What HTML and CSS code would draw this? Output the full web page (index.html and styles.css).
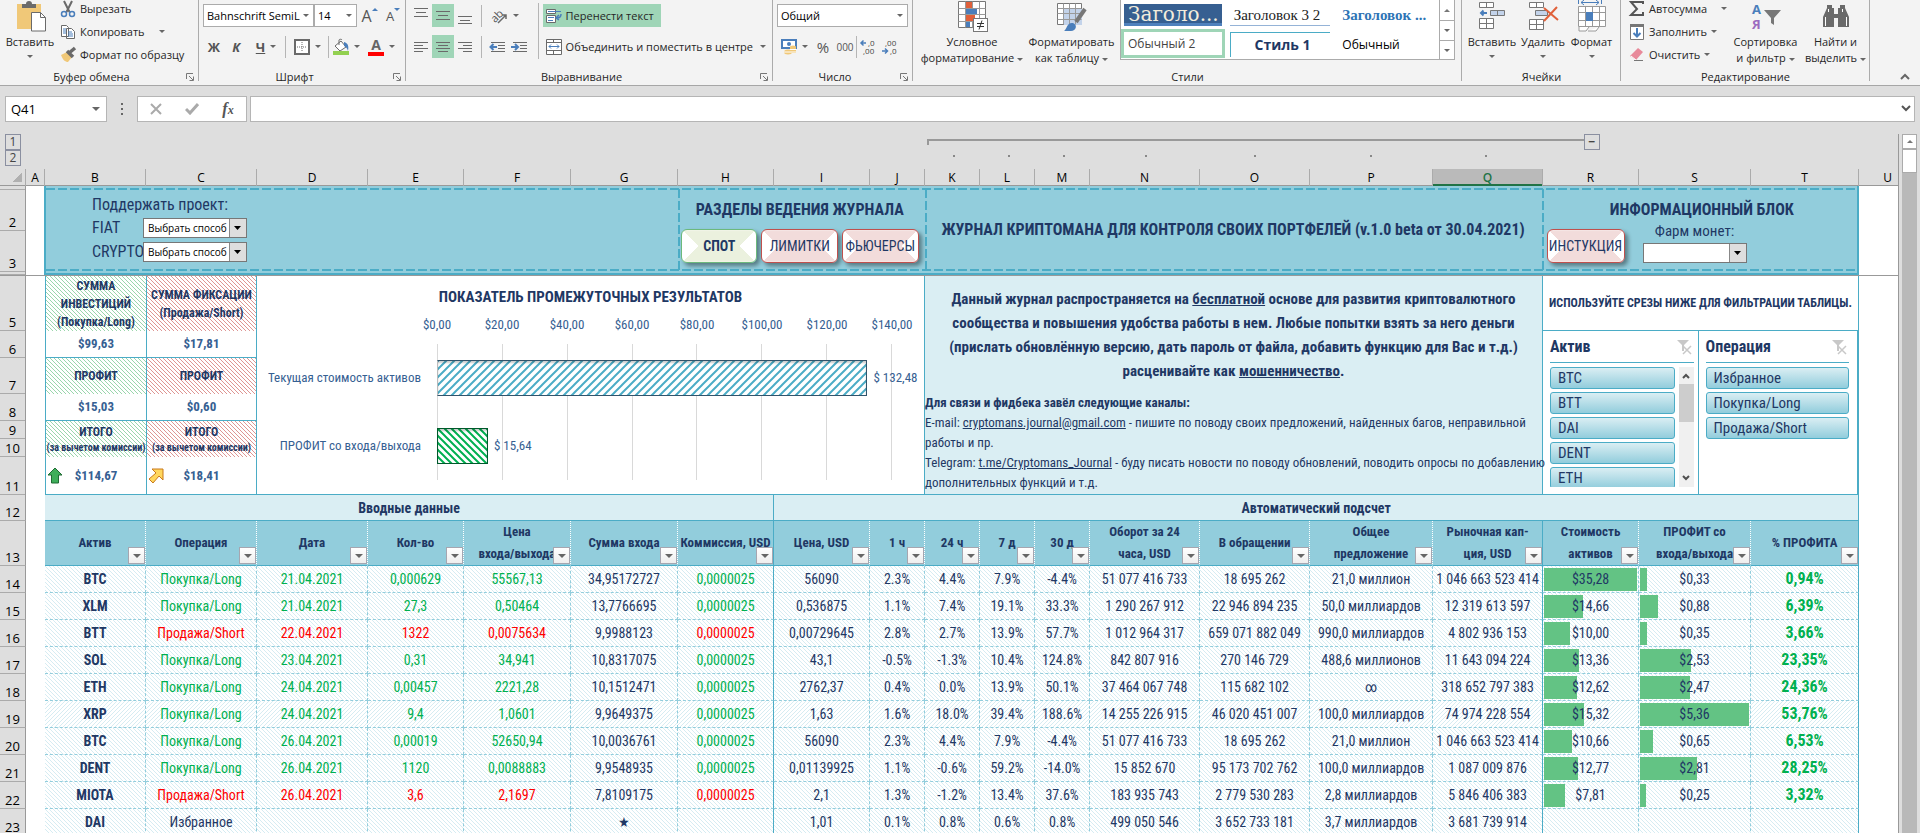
FILE: index.html
```html
<!DOCTYPE html>
<html lang="ru">
<head>
<meta charset="utf-8">
<title>Журнал криптомана</title>
<link rel="stylesheet" href="styles.css">
</head>
<body>
<header class="ribbon">
  <section class="group">
    <div class="tools">
      <button class="big w60"><svg width="32" height="32" viewBox="0 0 32 32"><rect x="3" y="4" width="24" height="25" fill="#f0c878"/><path d="M8 4h4a3 3 0 0 1 6 0h4v4H8z" fill="#6a6a6a"/><path d="M17.500 12.500h9l5 5v13.500h-14z" fill="#fff" stroke="#6a6a6a"/><path d="M26.500 12.500v5h5" fill="none" stroke="#6a6a6a"/></svg><span>Вставить</span><i class="caret"></i></button>
      <div class="stack">
        <button><svg width="16" height="18" viewBox="0 0 16 18"><path d="M4 1l5.500 11M12 1L6.500 12" stroke="#6a6a6a" stroke-width="2" fill="none"/><circle cx="4" cy="14" r="2.500" fill="none" stroke="#4a7ebb" stroke-width="1.500"/><circle cx="12" cy="14" r="2.500" fill="none" stroke="#4a7ebb" stroke-width="1.500"/></svg>Вырезать</button>
        <button><svg width="16" height="16" viewBox="0 0 16 16"><path d="M1.500 1.500h5l2 2v9h-7zM6.500 4.500h5l3 3v7h-8z" fill="#fff" stroke="#6a6a6a"/><path d="M3 5h3M3 7h3M3 9h3M8 8h4M8 10h5M8 12h5" stroke="#4a7ebb"/></svg>Копировать<i class="caret gap"></i></button>
        <button><svg width="16" height="16" viewBox="0 0 16 16"><path d="M1 8l6-3 5 5-4 5c-3 0-5-2-7-7z" fill="#f0c878"/><path d="M7 4l6 6M9 6l6-5" stroke="#6a6a6a" stroke-width="3.500"/></svg>Формат по образцу</button>
      </div>
    </div>
    <div class="caption">Буфер обмена<svg class="launch" width="8" height="8" viewBox="0 0 8 8"><path d="M.5 6V.5H7M3 3l4 4M7.500 3.500v4h-4" fill="none" stroke="#777"/></svg></div>
  </section>
  <section class="group">
    <div class="lines pad5">
      <div class="line"><select class="field w111" aria-label="Шрифт"><option>Bahnschrift SemiL</option></select><select class="field w43" aria-label="Размер"><option>14</option></select><button class="tool w25 grow-a">A<sup class="up"></sup></button><button class="tool w22 shrink-a">A<sup class="down"></sup></button></div>
      <div class="line"><button class="tool w22 b">Ж</button><button class="tool w22 b it">К</button><button class="tool w38 b"><u>Ч</u><i class="caret"></i></button><i class="sep"></i><button class="tool w42" aria-label="Границы"><svg width="16" height="16" viewBox="0 0 16 16"><rect x="1" y="1" width="14" height="14" fill="#fff" stroke="#6a6a6a" stroke-width="2"/><path d="M8 3v10M3 8h10" stroke="#6a6a6a" stroke-dasharray="1 1"/></svg><i class="caret"></i></button><i class="sep"></i><button class="tool w35" aria-label="Цвет заливки"><svg width="16" height="16" viewBox="0 0 16 16"><path d="M2 7l6-5 5 6-6 4z" fill="#fff" stroke="#6a6a6a"/><path d="M6 6V1c0-1 3-1 3 0" fill="none" stroke="#6a6a6a"/><path d="M11 3c4 1 5 4 4 9-1-3-2-4-4-5z" fill="#4a7ebb"/><rect y="12" width="16" height="4" fill="#92d050"/></svg><i class="caret"></i></button><button class="tool w35"><span class="fontcolor">A</span><i class="caret"></i></button></div>
    </div>
    <div class="caption">Шрифт<svg class="launch" width="8" height="8" viewBox="0 0 8 8"><path d="M.5 6V.5H7M3 3l4 4M7.500 3.500v4h-4" fill="none" stroke="#777"/></svg></div>
  </section>
  <section class="group">
    <div class="tools">
      <div class="lines pad5">
        <div class="line"><button class="tool w22" aria-label="По верхнему краю"><svg width="14" height="16" viewBox="0 0 14 16"><path d="M0 .5h14M2 4.500h10M0 8.500h14" stroke="#6a6a6a"/></svg></button><button class="tool w22 on" aria-label="По середине"><svg width="14" height="16" viewBox="0 0 14 16"><path d="M0 3.500h14M2 7.500h10M0 11.500h14" stroke="#6a6a6a"/></svg></button><button class="tool w22" aria-label="По нижнему краю"><svg width="14" height="16" viewBox="0 0 14 16"><path d="M0 8.500h14M2 12.500h10M0 15.500h14" stroke="#6a6a6a"/></svg></button><i class="sep far"></i><button class="tool w38" aria-label="Ориентация"><svg width="17" height="16" viewBox="0 0 17 16"><text x="0" y="12" class="rot" transform="rotate(-45 6 9)">ab</text><path d="M7 15l8-8M15 11V7h-4" fill="none" stroke="#6a6a6a" stroke-width="1.500"/></svg><i class="caret"></i></button></div>
        <div class="line"><button class="tool w22" aria-label="По левому краю"><svg width="14" height="12" viewBox="0 0 14 12"><path d="M0 1.500h14M0 4.500h9M0 7.500h14M0 10.500h9" stroke="#6a6a6a"/></svg></button><button class="tool w22 on" aria-label="По центру"><svg width="14" height="12" viewBox="0 0 14 12"><path d="M0 1.500h14M2 4.500h10M0 7.500h14M2 10.500h10" stroke="#6a6a6a"/></svg></button><button class="tool w22" aria-label="По правому краю"><svg width="14" height="12" viewBox="0 0 14 12"><path d="M0 1.500h14M5 4.500h9M0 7.500h14M5 10.500h9" stroke="#6a6a6a"/></svg></button><i class="sep far"></i><button class="tool w22" aria-label="Уменьшить отступ"><svg width="16" height="12" viewBox="0 0 16 12"><path d="M2 1.500h14M9 4.500h7M9 7.500h7M2 10.500h14" stroke="#6a6a6a"/><path d="M8 6H2M4.500 3L1.500 6l3 3" fill="none" stroke="#4a7ebb" stroke-width="2"/></svg></button><button class="tool w22" aria-label="Увеличить отступ"><svg width="16" height="12" viewBox="0 0 16 12"><path d="M2 1.500h14M9 4.500h7M9 7.500h7M2 10.500h14" stroke="#6a6a6a"/><path d="M0 6h6M4 3l3 3-3 3" fill="none" stroke="#4a7ebb" stroke-width="2"/></svg></button></div>
      </div>
      <i class="sep tall"></i>
      <div class="lines">
        <div class="line"><button class="wide on"><svg width="16" height="16" viewBox="0 0 16 16"><path d="M.5 1.500h9v4h-9zM.5 7.500h9v7h-9z" fill="#fff" stroke="#6a6a6a"/><path d="M2 3.500h13M2 9.500h6M2 12.500h5" stroke="#4a7ebb"/><path d="M15 6c0 3-2 4-4 4M13 7l-3 3 3 2" fill="none" stroke="#4a7ebb" stroke-width="1.500"/></svg>Перенести текст</button></div>
        <div class="line"><button class="wide"><svg width="16" height="16" viewBox="0 0 16 16"><path d="M.5.5h15v15H.5zM.5 3.500h15M.5 11.500h15M7.500.5v3M7.500 11.500v4" fill="#fff" stroke="#6a6a6a"/><path d="M3 7.500h10M5 5.500l-2 2 2 2M11 5.500l2 2-2 2" fill="none" stroke="#4a7ebb"/></svg>Объединить и поместить в центре<i class="caret in"></i></button></div>
      </div>
    </div>
    <div class="caption">Выравнивание<svg class="launch" width="8" height="8" viewBox="0 0 8 8"><path d="M.5 6V.5H7M3 3l4 4M7.500 3.500v4h-4" fill="none" stroke="#777"/></svg></div>
  </section>
  <section class="group">
    <div class="lines pad5">
      <div class="line"><select class="field w131" aria-label="Формат числа"><option>Общий</option></select></div>
      <div class="line"><button class="tool w35" aria-label="Денежный формат"><svg width="16" height="16" viewBox="0 0 16 16"><rect x="1" y="1" width="14" height="8" fill="#fff" stroke="#4a7ebb" stroke-width="2"/><circle cx="8" cy="5" r="2" fill="#4a7ebb"/><path d="M9 8h6v6H9z" fill="#f0c878"/><ellipse cx="12" cy="8" rx="3" ry="1.500" fill="#f0c878"/><ellipse cx="7" cy="13" rx="4" ry="2.500" fill="#f0c878"/><path d="M3 13h12M9 10.500h6" stroke="#fff"/></svg><i class="caret"></i></button><button class="tool w22 pct">%</button><button class="tool w22 zeros">000</button><i class="sep"></i><button class="tool w22" aria-label="Увеличить разрядность"><svg width="16" height="16" viewBox="0 0 16 16"><path d="M6 4H1M3.500 1.500L1 4l2.500 2.500" fill="none" stroke="#4a7ebb" stroke-width="1.500"/><text x="8" y="7" class="mini">,0</text><text x="3" y="15" class="mini">,00</text></svg></button><button class="tool w22" aria-label="Уменьшить разрядность"><svg width="16" height="16" viewBox="0 0 16 16"><path d="M0 12h5M3 9.500L5.500 12 3 14.500" fill="none" stroke="#4a7ebb" stroke-width="1.500"/><text x="3" y="7" class="mini">,00</text><text x="8" y="15" class="mini">,0</text></svg></button></div>
    </div>
    <div class="caption">Число<svg class="launch" width="8" height="8" viewBox="0 0 8 8"><path d="M.5 6V.5H7M3 3l4 4M7.500 3.500v4h-4" fill="none" stroke="#777"/></svg></div>
  </section>
  <section class="group">
    <div class="tools">
      <button class="big w118"><svg width="32" height="32" viewBox="0 0 32 32"><path d="M2.500 1.500h27v26h-27z" fill="#fff" stroke="#777"/><path d="M2.500 8.500h27M2.500 14.500h27M2.500 21.500h27M9.500 1.500v26M16.500 1.500v26M23.500 1.500v26" stroke="#999"/><path d="M10 2h6v6h-6zM10 15h9v6h-9z" fill="#e0603a"/><path d="M10 9h11v5H10zM10 22h4v5h-4z" fill="#4a7ebb"/><rect x="17.500" y="18.500" width="14" height="13" fill="#fff" stroke="#777"/><path d="M21 23.500h7M21 26.500h7M26 20.500l-3 9" stroke="#333"/></svg><span>Условное<br>форматирование<i class="caret in"></i></span></button>
      <button class="big w81"><svg width="32" height="32" viewBox="0 0 32 32"><path d="M1.500 3.500h24v21h-24z" fill="#fff" stroke="#777"/><path d="M8 9h18v16H8z" fill="#c3d3ea"/><path d="M1.500 8.500h24M1.500 13.500h24M1.500 19.500h24M7.500 3.500v21M13.500 3.500v21M19.500 3.500v21" stroke="#999"/><path d="M29 9l-9 13" stroke="#777" stroke-width="4"/><path d="M8 31c3-2 3-9 9-8 5 2 3 8-2 8z" fill="#4a7ebb"/></svg><span>Форматировать<br>как таблицу<i class="caret in"></i></span></button>
      <div class="gallery">
        <div class="styles">
          <button class="st title">Заголо...</button><button class="st h3">Заголовок 3 2</button><button class="st h4">Заголовок ...</button>
          <button class="st normal2">Обычный 2</button><button class="st one">Стиль 1</button><button class="st">Обычный</button>
        </div>
        <div class="arrows"><button aria-label="Вверх"><i class="caret upc"></i></button><button aria-label="Вниз"><i class="caret"></i></button><button aria-label="Ещё"><i class="caret more"></i></button></div>
      </div>
    </div>
    <div class="caption mid">Стили</div>
  </section>
  <section class="group">
    <div class="tools">
      <button class="big w60"><svg width="28" height="30" viewBox="0 0 28 30"><path d="M1.500 1.500h14v5h-14zM8.500 1.500v5M1.500 17.500h14v10h-14zM8.500 17.500v10M1.500 22.500h14" fill="#fff" stroke="#777"/><path d="M12.500 9.500h14v5h-14zM19.500 9.500v5" fill="#c3d3ea" stroke="#777"/><path d="M9 12H3M5.500 9.500L3 12l2.500 2.500" fill="none" stroke="#4a7ebb" stroke-width="2"/></svg><span>Вставить</span><i class="caret"></i></button>
      <button class="big w42"><svg width="30" height="30" viewBox="0 0 30 30"><path d="M1.500 1.500h14v5h-14zM8.500 1.500v5M1.500 18.500h14v10h-14zM8.500 18.500v10M1.500 23.500h14" fill="#fff" stroke="#777"/><path d="M7.500 9.500h12v5h-12z" fill="#c3d3ea" stroke="#777"/><path d="M16 7l14 12M29 6L16 20" stroke="#e0603a" stroke-width="2"/></svg><span>Удалить</span><i class="caret"></i></button>
      <button class="big w55"><svg width="30" height="32" viewBox="0 0 30 32"><path d="M1.500 0v4M24.500 0v4M4 2.500h18M7 0L4 2.500 7 5M19 0l3 2.500L19 5" fill="none" stroke="#4a7ebb"/><path d="M1.500 6.500h27v20h-27zM1.500 12.500h27M1.500 20.500h27M8.500 6.500v20M15.500 6.500v20M22.500 6.500v20" fill="#fff" stroke="#999"/><path d="M9 12h7v9H9z" fill="#4a7ebb"/><path d="M2 27v4h7l3-4M11 31h8l3-4" fill="#fff" stroke="#999"/></svg><span>Формат</span><i class="caret"></i></button>
    </div>
    <div class="caption mid">Ячейки</div>
  </section>
  <section class="group">
    <div class="tools">
      <div class="stack narrow">
        <button><svg width="16" height="16" viewBox="0 0 16 16"><path d="M14 3V1H2l6 7-6 6h12v-3" fill="none" stroke="#555" stroke-width="2"/></svg>Автосумма<i class="caret gap"></i></button>
        <button><svg width="16" height="16" viewBox="0 0 16 16"><path d="M1.500.5h13v15h-13z" fill="#fff" stroke="#777"/><path d="M1 0h14v3H1z" fill="#777"/><path d="M8 4v9M4.500 9L8 12.500 11.500 9" fill="none" stroke="#4a7ebb" stroke-width="2"/></svg>Заполнить<i class="caret in"></i></button>
        <button><svg width="16" height="16" viewBox="0 0 16 16"><path d="M1 9l8-8 5 4-7 8z" fill="#e8899a"/><path d="M2 9l5 4" stroke="#fff"/><path d="M5 13.500h9" stroke="#777"/></svg>Очистить<i class="caret in"></i></button>
      </div>
      <button class="big w75"><svg width="30" height="30" viewBox="0 0 30 30"><text x="1" y="13" class="az a">А</text><text x="1" y="28" class="az z">Я</text><path d="M13 9h17l-7 8v7l-3-2v-5z" fill="#777"/></svg><span>Сортировка<br>и фильтр<i class="caret in"></i></span></button>
      <button class="big w65"><svg width="28" height="30" viewBox="0 0 28 30"><path d="M5 4h5v3h2v6h4V7h2V4h5v3l4 9v10H16v-9h-4v9H1V16l4-9z" fill="#6a6a6a"/><path d="M3.500 16v9M24.500 16v9M6.500 8v3M20.500 8v3" stroke="#fff"/></svg><span>Найти и<br>выделить<i class="caret in"></i></span></button>
    </div>
    <div class="caption mid">Редактирование</div>
  </section>
  <button class="collapse" aria-label="Свернуть ленту"><svg width="10" height="7" viewBox="0 0 10 7"><path d="M1 6l4-4 4 4" fill="none" stroke="#666" stroke-width="2"/></svg></button>
</header>

<div class="formula">
  <select class="name" aria-label="Имя"><option>Q41</option></select>
  <i class="dots"></i>
  <div class="fx"><button aria-label="Отмена"><svg width="12" height="12" viewBox="0 0 12 12"><path d="M1 1l10 10M11 1L1 11" stroke="#aaa" stroke-width="2"/></svg></button><button aria-label="Ввод"><svg width="14" height="12" viewBox="0 0 14 12"><path d="M1 6l4 4 8-9" fill="none" stroke="#aaa" stroke-width="3"/></svg></button><button class="fn">f<small>x</small></button></div>
  <div class="entry"><input type="text" aria-label="Формула"><button aria-label="Развернуть"><svg width="10" height="8" viewBox="0 0 10 8"><path d="M1 1l4 4 4-4" fill="none" stroke="#555" stroke-width="2"/></svg></button></div>
</div>

<main class="work">
  <div class="sheet">
    <div class="outline cols">
      <div class="levels"><button>1</button><button>2</button></div>
      <div class="bracket"><i></i><i></i><i></i><i></i><i></i><i></i><i></i></div>
      <div class="minus"><button aria-label="Скрыть детали">−</button></div>
    </div>
    <div class="letters cols">
      <span class="corner"></span><span>A</span><span>B</span><span>C</span><span>D</span><span>E</span><span>F</span><span>G</span><span>H</span><span>I</span><span>J</span><span>K</span><span>L</span><span>M</span><span>N</span><span>O</span><span>P</span><span class="sel">Q</span><span>R</span><span>S</span><span>T</span><span>U</span>
    </div>

    <div class="cols banner-row">
      <div class="heads h-top"><span></span><span>2</span><span>3</span><span></span></div>
      <div class="banner">
        <div class="support">
          <p>Поддержать проект:</p>
          <label for="fiat">FIAT</label><select id="fiat" class="combo"><option>Выбрать способ</option></select>
          <label for="crypto">CRYPTO</label><select id="crypto" class="combo"><option>Выбрать способ</option></select>
        </div>
        <div class="parts">
          <h2>РАЗДЕЛЫ ВЕДЕНИЯ ЖУРНАЛА</h2>
          <div class="pills"><button class="pill green">СПОТ</button><button class="pill">ЛИМИТКИ</button><button class="pill thin">ФЬЮЧЕРСЫ</button></div>
        </div>
        <h1>ЖУРНАЛ КРИПТОМАНА ДЛЯ КОНТРОЛЯ СВОИХ ПОРТФЕЛЕЙ (v.1.0 beta от 30.04.2021)</h1>
        <div class="infoblock">
          <h2>ИНФОРМАЦИОННЫЙ БЛОК</h2>
          <button class="pill">ИНСТУКЦИЯ</button>
          <div class="farm"><label for="farm">Фарм монет:</label><select id="farm" class="combo"><option></option></select></div>
        </div>
      </div>
    </div>

    <div class="cols middle">
      <div class="heads h-mid"><span>5</span><span>6</span><span>7</span><span>8</span><span>9</span><span>10</span><span>11</span></div>
      <div class="stats long">
        <div class="lab">СУММА<br>ИНВЕСТИЦИЙ<br>(Покупка/Long)</div><div class="val">$99,63</div>
        <div class="lab">ПРОФИТ</div><div class="val">$15,03</div>
        <div class="lab">ИТОГО<small>(за вычетом комиссии)</small></div>
        <div class="val"><svg width="16" height="18" viewBox="0 0 16 18"><path d="M8 1l7 7h-3.500v8h-7V8H1z" fill="#3fae5a" stroke="#1f6b33"/></svg>$114,67</div>
      </div>
      <div class="stats short">
        <div class="lab">СУММА ФИКСАЦИИ<br>(Продажа/Short)</div><div class="val">$17,81</div>
        <div class="lab">ПРОФИТ</div><div class="val">$0,60</div>
        <div class="lab">ИТОГО<small>(за вычетом комиссии)</small></div>
        <div class="val"><svg width="16" height="18" viewBox="0 0 16 18"><path d="M4 2h11v11l-4-4-6 7-4-4 7-6z" fill="#ffd75e" stroke="#c9791a"/></svg>$18,41</div>
      </div>
      <div class="chart">
        <h3>ПОКАЗАТЕЛЬ ПРОМЕЖУТОЧНЫХ РЕЗУЛЬТАТОВ</h3>
        <div class="axis"><span>$0,00</span><span>$20,00</span><span>$40,00</span><span>$60,00</span><span>$80,00</span><span>$100,00</span><span>$120,00</span><span>$140,00</span></div>
        <div class="cats"><span>Текущая стоимость активов</span><span>ПРОФИТ со входа/выхода</span></div>
        <div class="plot">
          <div class="grid"><i></i><i></i><i></i><i></i><i></i><i></i><i></i><i></i></div>
          <div class="series"><b class="bar blue" style="width:94.6%"></b><span>$ 132,48</span></div>
          <div class="series"><b class="bar grn" style="width:11.2%"></b><span>$ 15,64</span></div>
        </div>
      </div>
      <div class="about">
        <p class="lead">Данный журнал распространяется на <u>бесплатной</u> основе для развития криптовалютного<br>сообщества и повышения удобства работы в нем. Любые попытки взять за него деньги<br>(прислать обновлённую версию, дать пароль от файла, добавить функцию для Вас и т.д.)<br>расценивайте как <u>мошенничество</u>.</p>
        <p><b>Для связи и фидбека завёл следующие каналы:</b><br>E-mail: <a href="#">cryptomans.journal@gmail.com</a> - пишите по поводу своих предложений, найденных багов, неправильной<br>работы и пр.<br>Telegram: <a href="#">t.me/Cryptomans_Journal</a> - буду писать новости по поводу обновлений, поводить опросы по добавлению<br>дополнительных функций и т.д.</p>
      </div>
      <div class="filters">
        <p>ИСПОЛЬЗУЙТЕ СРЕЗЫ НИЖЕ ДЛЯ ФИЛЬТРАЦИИ ТАБЛИЦЫ.</p>
        <div class="slicer">
          <h4>Актив<svg width="16" height="16" viewBox="0 0 16 16"><path d="M1 1h12L8 6v6H6V6z" fill="#c8c8c8"/><path d="M7 7l8 8M15 7l-8 8" stroke="#c8c8c8" stroke-width="1.500"/></svg></h4>
          <div class="scroller"><div class="items"><button>BTC</button><button>BTT</button><button>DAI</button><button>DENT</button><button>ETH</button></div>
          <div class="sbar"><svg width="10" height="8" viewBox="0 0 10 8"><path d="M2 6l3-3 3 3" fill="none" stroke="#505050" stroke-width="2"/></svg><i></i><svg width="10" height="8" viewBox="0 0 10 8"><path d="M2 2l3 3 3-3" fill="none" stroke="#505050" stroke-width="2"/></svg></div></div>
        </div>
        <div class="slicer">
          <h4>Операция<svg width="16" height="16" viewBox="0 0 16 16"><path d="M1 1h12L8 6v6H6V6z" fill="#c8c8c8"/><path d="M7 7l8 8M15 7l-8 8" stroke="#c8c8c8" stroke-width="1.500"/></svg></h4>
          <div class="items"><button>Избранное</button><button>Покупка/Long</button><button>Продажа/Short</button></div>
        </div>
      </div>
    </div>

    <table class="data">
      <colgroup><col class="c26"><col class="c19"><col class="c101"><col class="c111"><col class="c111"><col class="c96"><col class="c107"><col class="c107"><col class="c96"><col class="c96"><col class="c55"><col class="c55"><col class="c55"><col class="c55"><col class="c110"><col class="c110"><col class="c123"><col class="c110"><col class="c96"><col class="c112"><col class="c108"><col class="c39"></colgroup>
      <thead>
      <tr class="r12"><th class="n">12</th><td class="e"></td><th colspan="7" class="first strong">Вводные данные</th><th colspan="12" class="strong">Автоматический подсчет</th><td class="e"></td></tr>
      <tr class="r13"><th class="n">13</th><td class="e"></td><th class="first">Актив<button class="flt"></button></th><th>Операция<button class="flt"></button></th><th>Дата<button class="flt"></button></th><th>Кол-во<button class="flt"></button></th><th>Цена<br>входа/выхода<button class="flt"></button></th><th>Сумма входа<button class="flt"></button></th><th class="strong">Коммиссия, USD<button class="flt"></button></th><th>Цена, USD<button class="flt"></button></th><th>1 ч<button class="flt"></button></th><th>24 ч<button class="flt"></button></th><th>7 д<button class="flt"></button></th><th>30 д<button class="flt"></button></th><th>Оборот за 24<br>часа, USD<button class="flt"></button></th><th>В обращении<button class="flt"></button></th><th>Общее<br>предложение<button class="flt"></button></th><th class="strong">Рыночная кап-<br>ция, USD<button class="flt"></button></th><th>Стоимость<br>активов<button class="flt"></button></th><th>ПРОФИТ со<br>входа/выхода<button class="flt"></button></th><th class="strong">% ПРОФИТА<button class="flt"></button></th><td class="e"></td></tr>
      </thead>
      <tbody>
      <tr class="buy"><th class="n">14</th><td class="e"></td><td>BTC</td><td>Покупка/Long</td><td>21.04.2021</td><td>0,000629</td><td>55567,13</td><td>34,95172727</td><td>0,0000025</td><td>56090</td><td>2.3%</td><td>4.4%</td><td>7.9%</td><td>-4.4%</td><td>51 077 416 733</td><td>18 695 262</td><td>21,0 миллион</td><td>1 046 663 523 414</td><td><div class="m"><i style="width:100%"></i><span>$35,28</span></div></td><td><div class="m"><i style="width:6%"></i><span>$0,33</span></div></td><td>0,94%</td><td class="e"></td></tr>
      <tr class="buy"><th class="n">15</th><td class="e"></td><td>XLM</td><td>Покупка/Long</td><td>21.04.2021</td><td>27,3</td><td>0,50464</td><td>13,7766695</td><td>0,0000025</td><td>0,536875</td><td>1.1%</td><td>7.4%</td><td>19.1%</td><td>33.3%</td><td>1 290 267 912</td><td>22 946 894 235</td><td>50,0 миллиардов</td><td>12 319 613 597</td><td><div class="m"><i style="width:42%"></i><span>$14,66</span></div></td><td><div class="m"><i style="width:16%"></i><span>$0,88</span></div></td><td>6,39%</td><td class="e"></td></tr>
      <tr class="sell"><th class="n">16</th><td class="e"></td><td>BTT</td><td>Продажа/Short</td><td>22.04.2021</td><td>1322</td><td>0,0075634</td><td>9,9988123</td><td>0,0000025</td><td>0,00729645</td><td>2.8%</td><td>2.7%</td><td>13.9%</td><td>57.7%</td><td>1 012 964 317</td><td>659 071 882 049</td><td>990,0 миллиардов</td><td>4 802 936 153</td><td><div class="m"><i style="width:28%"></i><span>$10,00</span></div></td><td><div class="m"><i style="width:6%"></i><span>$0,35</span></div></td><td>3,66%</td><td class="e"></td></tr>
      <tr class="buy"><th class="n">17</th><td class="e"></td><td>SOL</td><td>Покупка/Long</td><td>23.04.2021</td><td>0,31</td><td>34,941</td><td>10,8317075</td><td>0,0000025</td><td>43,1</td><td>-0.5%</td><td>-1.3%</td><td>10.4%</td><td>124.8%</td><td>842 807 916</td><td>270 146 729</td><td>488,6 миллионов</td><td>11 643 094 224</td><td><div class="m"><i style="width:38%"></i><span>$13,36</span></div></td><td><div class="m"><i style="width:47%"></i><span>$2,53</span></div></td><td>23,35%</td><td class="e"></td></tr>
      <tr class="buy"><th class="n">18</th><td class="e"></td><td>ETH</td><td>Покупка/Long</td><td>24.04.2021</td><td>0,00457</td><td>2221,28</td><td>10,1512471</td><td>0,0000025</td><td>2762,37</td><td>0.4%</td><td>0.0%</td><td>13.9%</td><td>50.1%</td><td>37 464 067 748</td><td>115 682 102</td><td>∞</td><td>318 652 797 383</td><td><div class="m"><i style="width:35%"></i><span>$12,62</span></div></td><td><div class="m"><i style="width:46%"></i><span>$2,47</span></div></td><td>24,36%</td><td class="e"></td></tr>
      <tr class="buy alt"><th class="n">19</th><td class="e"></td><td>XRP</td><td>Покупка/Long</td><td>24.04.2021</td><td>9,4</td><td>1,0601</td><td>9,9649375</td><td>0,0000025</td><td>1,63</td><td>1.6%</td><td>18.0%</td><td>39.4%</td><td>188.6%</td><td>14 255 226 915</td><td>46 020 451 007</td><td>100,0 миллиардов</td><td>74 974 228 554</td><td><div class="m"><i style="width:43%"></i><span>$15,32</span></div></td><td><div class="m"><i style="width:100%"></i><span>$5,36</span></div></td><td>53,76%</td><td class="e"></td></tr>
      <tr class="buy"><th class="n">20</th><td class="e"></td><td>BTC</td><td>Покупка/Long</td><td>26.04.2021</td><td>0,00019</td><td>52650,94</td><td>10,0036761</td><td>0,0000025</td><td>56090</td><td>2.3%</td><td>4.4%</td><td>7.9%</td><td>-4.4%</td><td>51 077 416 733</td><td>18 695 262</td><td>21,0 миллион</td><td>1 046 663 523 414</td><td><div class="m"><i style="width:30%"></i><span>$10,66</span></div></td><td><div class="m"><i style="width:12%"></i><span>$0,65</span></div></td><td>6,53%</td><td class="e"></td></tr>
      <tr class="buy"><th class="n">21</th><td class="e"></td><td>DENT</td><td>Покупка/Long</td><td>26.04.2021</td><td>1120</td><td>0,0088883</td><td>9,9548935</td><td>0,0000025</td><td>0,01139925</td><td>1.1%</td><td>-0.6%</td><td>59.2%</td><td>-14.0%</td><td>15 852 670</td><td>95 173 702 762</td><td>100,0 миллиардов</td><td>1 087 009 876</td><td><div class="m"><i style="width:37%"></i><span>$12,77</span></div></td><td><div class="m"><i style="width:52%"></i><span>$2,81</span></div></td><td>28,25%</td><td class="e"></td></tr>
      <tr class="sell"><th class="n">22</th><td class="e"></td><td>MIOTA</td><td>Продажа/Short</td><td>26.04.2021</td><td>3,6</td><td>2,1697</td><td>7,8109175</td><td>0,0000025</td><td>2,1</td><td>1.3%</td><td>-1.2%</td><td>13.4%</td><td>37.6%</td><td>183 935 743</td><td>2 779 530 283</td><td>2,8 миллиардов</td><td>5 846 406 383</td><td><div class="m"><i style="width:23%"></i><span>$7,81</span></div></td><td><div class="m"><i style="width:5%"></i><span>$0,25</span></div></td><td>3,32%</td><td class="e"></td></tr>
      <tr><th class="n">23</th><td class="e"></td><td>DAI</td><td>Избранное</td><td></td><td></td><td></td><td>★</td><td></td><td>1,01</td><td>0.1%</td><td>0.8%</td><td>0.6%</td><td>0.8%</td><td>499 050 546</td><td>3 652 733 181</td><td>3,7 миллиардов</td><td>3 681 739 914</td><td></td><td></td><td></td><td class="e"></td></tr>
      </tbody>
    </table>
  </div>
  <div class="vscroll"><button aria-label="Прокрутить вверх"><i class="caret upc"></i></button><i class="thumb"></i></div>
</main>
</body>
</html>
```
FILE: styles.css
```css
:root {
  --ui: "Open Sans", "Noto Sans", sans-serif;
  --din: "Liberation Sans Narrow", "Roboto Condensed", "Open Sans Condensed", "DejaVu Sans Condensed", sans-serif;
  --navy: #1f3864;
  --steel: #366092;
  --teal: #4bacc6;
  --aqua: #92cddc;
  --ice: #daeef3;
}
* { box-sizing: border-box; }
body { margin: 0; height: 100vh; display: flex; flex-direction: column; overflow: hidden; background: #dedede; font: 12px/16px var(--ui); color: #262626; }
button { border: 0; padding: 0; background: none; font: inherit; color: inherit; white-space: nowrap; }
select { appearance: none; border-radius: 0; font: inherit; color: #000; }
h1, h2, h3, h4, p { margin: 0; }
i { font-style: normal; }

/* Ribbon */
.ribbon { flex: none; display: grid; grid-template-columns: 199fr 207fr 367fr 140fr 549fr 159fr 249fr 50fr; height: 86px; background: #f3f3f3; border-bottom: 1px solid #a6a6a6; overflow: hidden; font-size: 11px; }
.ribbon svg { overflow: visible; }
.group { position: relative; display: flex; flex-direction: column; min-width: 0; }
.group::after { content: ""; position: absolute; right: 0; top: 0; bottom: 4px; width: 1px; background: #ababab; }
.tools { display: flex; height: 66px; align-items: flex-end; }
.caption { display: flex; justify-content: center; height: 19px; line-height: 22px; padding-right: 16px; }
.caption.mid { padding-right: 0; }
.launch { position: absolute; right: 5px; bottom: 4px; }
.caret { display: inline-block; width: 0; height: 0; border: 3px solid transparent; border-top-color: #666; border-bottom: 0; flex: none; }
.caret.upc { border: 3px solid transparent; border-bottom-color: #777; border-top: 0; }
.caret.in { margin-left: 3px; vertical-align: middle; }
.caret.gap { margin-left: 10px; }
.stack .caret.in { margin-left: 0; }
.big { display: flex; flex-direction: column; align-items: center; height: 66px; line-height: 16px; }
.big svg { flex: none; height: 32px; margin-bottom: 2px; }
.big .caret { margin-top: 5px; }
.big .caret.in { margin-top: 0; }
.stack { display: flex; flex-direction: column; }
.stack button { display: flex; align-items: center; height: 23px; gap: 4px; }
.stack.narrow { width: 107px; padding-left: 8px; }
.w22 { width: 22px; } .w25 { width: 25px; } .w35 { width: 35px; } .w38 { width: 38px; } .w42 { width: 42px; } .w43 { width: 43px; }
.w55 { width: 55px; } .w60 { width: 60px; } .w65 { width: 65px; } .w75 { width: 75px; } .w81 { width: 81px; } .w111 { width: 111px; } .w118 { width: 118px; } .w131 { width: 131px; }
.lines { display: flex; flex-direction: column; height: 66px; }
.pad5 { padding-left: 4px; }
.line { display: flex; align-items: center; height: 31px; }
.field { height: 23px; padding: 0 3px; border: 1px solid #ababab; background: #fff url("data:image/svg+xml,%3Csvg xmlns='http://www.w3.org/2000/svg' width='6' height='3'%3E%3Cpath d='M0 0h6L3 3z' fill='%23666'/%3E%3C/svg%3E") no-repeat right 4px center; }
.tool { display: flex; align-items: center; justify-content: center; gap: 5px; height: 23px; flex: none; }
.on { background: #9fd5b7; }
.b { font-size: 13px; font-weight: 700; color: #555; }
.it { font-style: italic; }
.grow-a { font-size: 16px; color: #555; }
.shrink-a { font-size: 13px; color: #555; }
.grow-a, .shrink-a { gap: 0; }
.up, .down { align-self: flex-start; border: 3px solid transparent; border-bottom-color: #4a7ebb; border-top: 0; margin-top: 4px; }
.down { border: 3px solid transparent; border-top-color: #4a7ebb; border-bottom: 0; }
.fontcolor { width: 16px; height: 18px; border-bottom: 4px solid #f00; font-weight: 700; font-size: 14px; line-height: 14px; color: #666; }
.sep { width: 1px; height: 22px; background: #b5b5b5; }
.sep.far { margin: 0 4px 0 5px; }
.sep.tall { height: 56px; align-self: flex-start; margin: 3px 4px 0 8px; }
.wide { display: flex; align-items: center; gap: 4px; height: 23px; padding: 0 7px 0 3px; }
.pct { font-size: 15px; color: #555; }
.zeros { font-size: 10px; color: #555; }
.mini { font: 8px "Open Sans", sans-serif; fill: #444; }
.rot { font: 11px "Open Sans", sans-serif; fill: #555; }
.az { font: 700 13px "Open Sans", sans-serif; }
.az.a { fill: #4a7ebb; } .az.z { fill: #9b6bc0; }
.gallery { display: flex; flex: 1; align-self: flex-start; height: 60px; margin: 0 7px 0 8px; border: 1px solid #ababab; border-top: 0; background: #fff; }
.styles { flex: 1; display: grid; grid-template-columns: 106fr 109fr 104fr; grid-template-rows: 28px 31px; }
.st { margin: 4px 5px 2px 3px; text-align: left; padding-left: 4px; font-size: 12px; color: #000; }
.st.title { background: #365f91; border-bottom: 3px solid #4f81bd; color: #f2ecdc; font: 20px/18px "DejaVu Serif", serif; }
.st.h3 { border-bottom: 1px solid #95b3d7; font: 15px/18px "Liberation Serif", serif; color: #222; }
.st.h4 { font: 700 15px/18px "Liberation Serif", serif; color: #2e74b5; }
.st.normal2 { margin: 1px 2px 1px 0; border: 3px solid #9fd5b7; color: #444; }
.st.one { border: 1px solid var(--teal); border-width: 1px 0 0 1px; text-align: center; font: 700 14px/18px var(--ui); color: var(--navy); }
.arrows { width: 15px; display: grid; grid-template-rows: 20px 20px 19px; border-left: 1px solid #ababab; }
.arrows button + button { border-top: 1px solid #ababab; }
.arrows button { display: grid; place-items: center; }
.more { box-shadow: 0 -5px 0 -2px #666; }
.collapse { align-self: end; justify-self: end; margin: 0 10px 5px; height: 7px; line-height: 0; }

/* Formula bar */
.formula { flex: none; display: flex; height: 48px; padding: 10px 5px 12px; }
.name { width: 102px; height: 26px; padding-left: 5px; font-size: 13px; border: 1px solid #b5b5b5; background: #fff url("data:image/svg+xml,%3Csvg xmlns='http://www.w3.org/2000/svg' width='8' height='4'%3E%3Cpath d='M0 0h8L4 4z' fill='%23666'/%3E%3C/svg%3E") no-repeat right 6px center; }
.dots { width: 2px; height: 12px; margin: 7px 14px; background: repeating-linear-gradient(#666 0 2px, transparent 2px 5px); }
.fx { display: grid; grid-template-columns: 1fr 1fr 1fr; width: 110px; height: 26px; border: 1px solid #b5b5b5; background: #fff; align-items: center; }
.fx button { line-height: 0; }
.fx .fn { font: italic 700 16px/20px "Liberation Serif", serif; color: #555; }
.fn small { font-size: 12px; }
.entry { flex: 1; display: flex; height: 26px; margin-left: 3px; border: 1px solid #b5b5b5; background: #fff; }
.entry input { flex: 1; border: 0; background: none; }
.entry button { width: 17px; line-height: 0; }

/* Sheet frame */
.work { flex: 1; display: flex; min-height: 0; }
.sheet { flex: 1; min-width: 0; overflow: hidden; border-right: 1px solid #999; }
.cols { display: grid; grid-template-columns: 26px 19fr 101fr 111fr 111fr 96fr 107fr 107fr 96fr 96fr 55fr 55fr 55fr 55fr 110fr 110fr 123fr 110fr 96fr 112fr 108fr 39fr; }
.cols > * { min-width: 0; }
.outline { height: 35px; }
.levels { grid-column: 1; padding-left: 5px; display: grid; grid-template-rows: 16px 16px; }
.levels button, .minus button { width: 16px; height: 16px; border: 1px solid #8a8fa0; line-height: 14px; color: #444; }
.bracket { grid-column: 12 / 19; display: grid; grid-template-columns: 55fr 55fr 55fr 110fr 110fr 123fr 110fr; margin: 5px 0 0 2px; height: 6px; border: 2px solid #999; border-width: 2px 0 0 2px; }
.bracket { border-right: 0; border-bottom: 0; }
.bracket i { width: 2px; height: 2px; margin: 14px 0 0 calc(50% - 3px); background: #888; }
.minus { grid-column: 19; display: flex; }
.minus::before { content: ""; width: 41px; height: 2px; margin-top: 5px; background: #999; }
.minus button { font-weight: 700; }
.letters { height: 17px; font-size: 12px; line-height: 17px; text-align: center; color: #000; border-bottom: 1px solid #999; }
.letters span { border-right: 1px solid #ababab; }
.letters span:last-child { border-right: 0; text-align: right; padding-right: 6px; }
.letters .sel { background: #bababa; color: #217346; font-weight: 600; box-shadow: inset 0 -2px #217346; }
.corner { background: linear-gradient(135deg, transparent 50%, #b0b0b0 50%) no-repeat 13px 4px / 9px 9px; }
.heads { display: grid; background: #dedede; border-right: 1px solid #999; color: #000; font-size: 13px; line-height: 16px; text-align: center; }
.cols .heads { font-family: var(--ui); }
.heads span { display: flex; align-items: flex-end; justify-content: center; border-bottom: 1px solid #ababab; overflow: hidden; }
.h-top { grid-template-rows: 4px 41px 41px 3px; }
.h-mid { grid-template-rows: 55px 27px 36px 27px 18px 18px 38px; }

/* Banner */
.banner-row { height: 90px; background: #fff; border-bottom: 1px solid #999; color: var(--navy); font-family: var(--din); }
.banner { grid-column: 3 / 22; display: grid; grid-template-columns: 633fr 247fr 618fr 316fr; position: relative; background: var(--aqua); border: solid var(--teal); border-width: 0 2px 2px; margin-left: -1px; padding: 3px 0 2px; }
.banner::before, .banner::after { content: ""; position: absolute; left: 0; right: 0; height: 2px; background: repeating-linear-gradient(90deg, var(--teal) 0 9px, transparent 9px 12px); }
.banner::before { top: 2px; } .banner::after { bottom: 2px; }
.banner > * { min-width: 0; }
.banner > * + * { background: repeating-linear-gradient(var(--teal) 0 9px, transparent 9px 12px) no-repeat left / 2px 100%; }
.banner h1, .banner h2 { font-size: 16px; line-height: 20px; font-weight: 700; text-align: center; white-space: nowrap; }
.banner h1 { display: grid; place-items: center; }
.support { display: grid; grid-template-columns: 51px 104px; grid-template-rows: 23px 24px 24px; align-content: start; align-items: center; padding: 4px 0 0 46px; font-size: 16px; line-height: 20px; }
.support p { grid-column: 1 / 3; }
.combo { width: 104px; height: 20px; padding: 0 4px; border: 1px solid #777; font: 10px/16px var(--ui); background: #fff url("data:image/svg+xml,%3Csvg xmlns='http://www.w3.org/2000/svg' width='17' height='18'%3E%3Cpath d='M0 0h17v18H0z' fill='%23dedede'/%3E%3Cpath d='M.5 0v18' stroke='%23888'/%3E%3Cpath d='M5 7h7L8.500 11z'/%3E%3C/svg%3E") no-repeat right center; }
.parts { padding: 11px 6px 0 3px; }
.pills { display: grid; grid-template-columns: 1fr 1fr 1fr; gap: 4px; margin-top: 9px; }
.pill { height: 34px; border: 1px solid #c0504d; border-radius: 6px; color: var(--navy); font-size: 14px; box-shadow: 3px 3px 4px rgba(0, 0, 0, .4), inset 0 0 2px #fff; background: conic-gradient(from 225deg at 22% 50%, #fff 90deg, transparent 0), conic-gradient(from 45deg at 78% 50%, #fff 90deg, #f2dcdb 0); }
.pill.green { border-color: #6cb97c; font-weight: 700; background: conic-gradient(from 225deg at 22% 50%, #fff 90deg, transparent 0), conic-gradient(from 45deg at 78% 50%, #fff 90deg, #ebf1de 0); }
.infoblock { display: grid; grid-template-columns: 78px 1fr; grid-template-rows: 20px 1fr; column-gap: 18px; padding: 11px 0 0 5px; }
.infoblock h2 { grid-column: 1 / 3; }
.infoblock .pill { margin-top: 9px; }
.farm { display: flex; flex-direction: column; width: 104px; text-align: center; font-size: 15px; line-height: 23px; }
.farm label { height: 23px; }

/* Summary block */
.middle { height: 219px; background: #fff; font-family: var(--din); color: var(--navy); }
.cols.middle > :not(.heads) { border-bottom: 1px solid var(--teal); }
.stats { border-left: 1px solid var(--teal); display: grid; grid-template-rows: 55px 27px 36px 27px 36px 37px; text-align: center; font-size: 12px; font-weight: 700; line-height: 18px; white-space: nowrap; }
.stats.long { grid-column: 3; } .stats.short { grid-column: 4; border-right: 1px solid var(--teal); }
.stats > div { display: flex; flex-direction: column; justify-content: center; }
.stats .val { position: relative; font-size: 13px; color: var(--steel); border-bottom: 1px solid var(--teal); }
.stats .val:last-child { border-bottom: 0; }
.val svg { position: absolute; left: 1px; top: 10px; }
.stats small { font-size: 10px; line-height: 14px; }
.long .lab { background: url("data:image/svg+xml,%3Csvg xmlns='http://www.w3.org/2000/svg' width='4' height='4'%3E%3Cpath d='M0 0h1v1H0zM1 1h1v1H1zM2 2h1v1H2zM3 3h1v1H3z' fill='%239ad6ac'/%3E%3C/svg%3E"); }
.short .lab { background: url("data:image/svg+xml,%3Csvg xmlns='http://www.w3.org/2000/svg' width='4' height='4'%3E%3Cpath d='M0 0h1v1H0zM1 1h1v1H1zM2 2h1v1H2zM3 3h1v1H3z' fill='%23de9694'/%3E%3C/svg%3E"); }
.chart { grid-column: 5 / 12; display: grid; grid-template-columns: 180fr 455fr 32fr; grid-template-rows: 68px 136px; font-size: 13px; color: var(--steel); padding-right: 1px; }
.chart > * { min-width: 0; }
.chart h3 { grid-column: 1 / 4; grid-row: 1; text-align: center; font-size: 15px; line-height: 20px; margin-top: 11px; color: var(--navy); }
.axis { grid-column: 2; grid-row: 1; display: flex; justify-content: space-between; align-self: end; height: 29px; line-height: 20px; }
.axis span { width: 0; display: flex; justify-content: center; white-space: nowrap; }
.cats { grid-column: 1; display: grid; grid-template-rows: 1fr 1fr; align-items: center; text-align: right; padding-right: 16px; white-space: nowrap; }
.plot { grid-column: 2; display: grid; grid-template-rows: 1fr 1fr; align-items: center; position: relative; }
.grid { position: absolute; inset: 0; display: flex; justify-content: space-between; }
.grid i { width: 1px; background: #d9d9d9; }
.series { position: relative; display: flex; align-items: center; gap: 6px; white-space: nowrap; }
.bar { flex: none; height: 36px; border: 1px solid #31546b; border-left-color: #bbb; box-shadow: inset 0 2px 2px rgba(0, 0, 0, .2); }
.bar.blue { background: #fff url("data:image/svg+xml,%3Csvg xmlns='http://www.w3.org/2000/svg' width='8' height='8'%3E%3Cpath d='M-2 2L2-2M-1 9L9-1M6 10L10 6' stroke='%234bacc6' stroke-width='2'/%3E%3C/svg%3E"); }
.bar.grn { background: #fff url("data:image/svg+xml,%3Csvg xmlns='http://www.w3.org/2000/svg' width='7' height='7'%3E%3Cpath d='M-1-1L8 8M5-2L9 2M-2 5L2 9' stroke='%2300b050' stroke-width='2'/%3E%3C/svg%3E"); border-color: #00592b; }
.about { grid-column: 12 / 19; padding: 11px 0 0; background: var(--ice); border-left: 1px solid var(--teal); border-right: 1px solid var(--teal); font-size: 13px; line-height: 20px; white-space: nowrap; margin-left: -1px; }
.about .lead { font-size: 15px; font-weight: 700; line-height: 24px; text-align: center; margin-bottom: 10px; }
.about a { color: inherit; }
.filters { grid-column: 19 / 22; display: grid; grid-template-columns: 156fr 160fr; grid-template-rows: 54px 164px; border-right: 1px solid var(--teal); }
.filters p { grid-column: 1 / 3; display: grid; place-items: center; font-size: 12px; font-weight: 700; white-space: nowrap; }
.slicer { border: 1px solid var(--teal); border-width: 1px 1px 0 0; padding: 1px 4px 6px 7px; overflow: hidden; display: flex; flex-direction: column; }
.slicer:last-child { padding-right: 8px; }
.slicer h4 { display: flex; flex: none; justify-content: space-between; align-items: center; height: 31px; margin-bottom: 4px; font-size: 16px; border-bottom: 1px solid var(--teal); padding-right: 2px; }
.scroller { display: flex; gap: 4px; height: 120px; overflow: hidden; }
.items { flex: 1; display: flex; flex-direction: column; gap: 3px; }
.items button { flex: none; height: 22px; border: 1px solid var(--teal); border-radius: 3px; padding-left: 7px; text-align: left; font-size: 15px; line-height: 20px; background: linear-gradient(var(--ice), var(--aqua)); }
.sbar { width: 15px; background: #f0f0f0; display: flex; flex-direction: column; align-items: center; padding: 5px 0; }
.sbar i { width: 15px; height: 38px; margin: 4px 0 auto; background: #cdcdcd; }

/* Data table */
.data { width: 100%; table-layout: fixed; border-collapse: separate; border-spacing: 0; background: #fff; font: 14px/18px var(--din); color: var(--navy); text-align: center; }
.c26 { width: 26px; } .c19 { width: 19px; } .c101 { width: 101px; } .c111 { width: 111px; } .c96 { width: 96px; } .c107 { width: 107px; } .c55 { width: 55px; } .c110 { width: 110px; } .c123 { width: 123px; } .c112 { width: 112px; } .c108 { width: 108px; } .c39 { width: 39px; }
.data th, .data td { padding: 0; white-space: nowrap; }
.data tr > .n { background: #dedede; border: 0 solid #999; border-right-width: 1px; border-bottom: 1px solid #ababab; font: 13px/16px var(--ui); color: #000; vertical-align: bottom; }
.data tr > .e { background: #fff; border: 0; }
.r12 th { height: 26px; background: var(--ice); border: 1px solid var(--teal); border-width: 0 1px 1px 0; }
.r13 th { position: relative; height: 44px; font-size: 13px; line-height: 22px; background: var(--aqua); border-right: 1px dotted #fff; border-bottom: 1px solid var(--teal); }
.data th.strong, tbody td:nth-child(9), tbody td:nth-child(18), tbody td:nth-child(21) { border-right: 1px solid var(--teal); }
.flt { position: absolute; right: 0; bottom: 1px; width: 17px; height: 17px; border: 1px solid #a6a6b0; background: linear-gradient(#fff, #eee); }
.flt::after { content: ""; position: absolute; left: 4px; top: 6px; border: 4px solid transparent; border-top-color: #666; border-bottom: 0; }
tbody td { height: 27px; border-right: 1px dashed var(--aqua); border-bottom: 1px dashed var(--aqua); background: url("data:image/svg+xml,%3Csvg xmlns='http://www.w3.org/2000/svg' width='4' height='4'%3E%3Cpath d='M0 0h1v1H0zM1 1h1v1H1zM2 2h1v1H2zM3 3h1v1H3z' fill='%23d6ecf2'/%3E%3C/svg%3E"); }
.alt td { background: url("data:image/svg+xml,%3Csvg xmlns='http://www.w3.org/2000/svg' width='4' height='4'%3E%3Cpath d='M3 0h1v1H3zM2 1h1v1H2zM1 2h1v1H1zM0 3h1v1H0z' fill='%23d6ecf2'/%3E%3C/svg%3E"); }
tbody td:nth-child(3), tbody td:nth-child(21) { font-weight: 700; }
tbody td:nth-child(21) { color: #00b050; font-size: 16px; }
.buy td:nth-child(n+4):nth-child(-n+7), .buy td:nth-child(9) { color: #00b050; }
.sell td:nth-child(n+4):nth-child(-n+7), .sell td:nth-child(9) { color: #f00; }
.m { position: relative; height: 23px; margin: 0 1px; line-height: 23px; }
.m i { position: absolute; left: 0; top: 0; height: 23px; background: #63c384; }
.m span { position: relative; }

/* Sheet scroll bar */
.vscroll { width: 15px; margin: 0 3px; background: #b9b9b9; display: flex; flex-direction: column; }
.vscroll button { height: 15px; border: 1px solid #ababab; background: #fff; display: grid; place-items: center; }
.thumb { height: 24px; border: 1px solid #ababab; background: #fff; }
```
